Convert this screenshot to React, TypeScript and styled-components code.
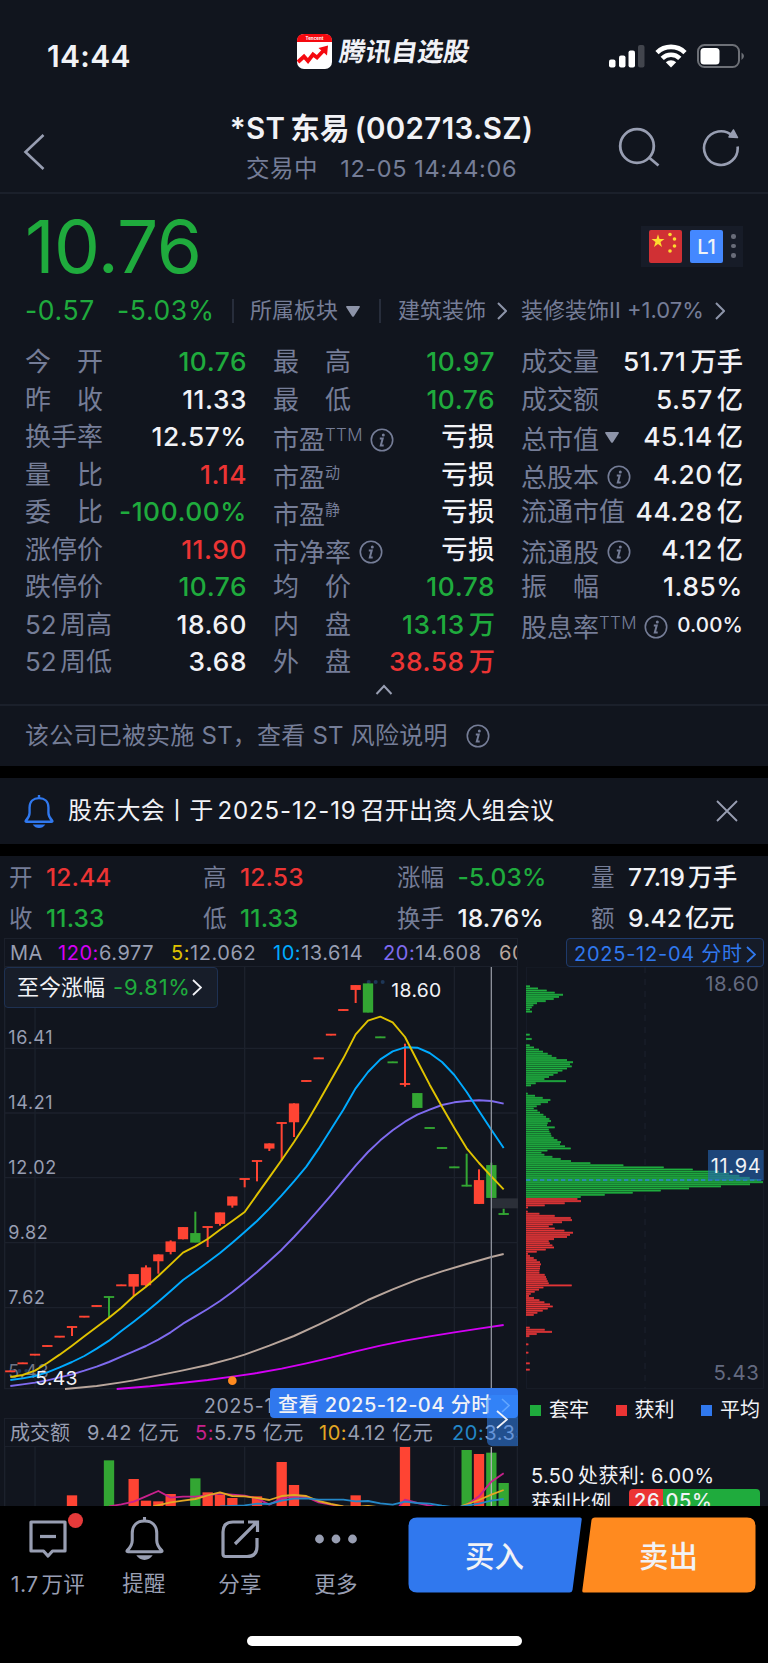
import React from "react";
import styled, { createGlobalStyle } from "styled-components";

const c = {
  bg: "#11151e",
  line: "#1b202b",
  label: "#757d97",
  text: "#f1f2f6",
  chart: "#989eb2",
  green: "#1fab3d",
  red: "#ec3434",
  blue: "#3078ee",
  orange: "#ff8a1f",
};

type Tone = "up" | "down" | "flat";
const tone = (t?: Tone) => (t === "up" ? c.red : t === "down" ? c.green : c.text);

const Global = createGlobalStyle`
  * { box-sizing: border-box; }
  body { margin: 0; background: #000; }
`;

const Page = styled.div`
  width: 768px;
  height: 1663px;
  overflow: hidden;
  display: flex;
  flex-direction: column;
  background: #000;
  color: ${c.text};
  font-family: Inter, "Noto Sans CJK SC", sans-serif;
  line-height: 1.25;
  white-space: nowrap;
`;

/* ---------- status bar ---------- */
const StatusBar = styled.div`
  display: grid;
  grid-template-columns: 250px 1fr 171px;
  height: 104px;
  padding-left: 47px;
  background: ${c.bg};
`;
const Clock = styled.div`
  padding-top: 38px;
  font-size: 30px;
  line-height: 36px;
  font-weight: 600;
  letter-spacing: 0.35px;
`;
const Brand = styled.div`
  display: flex;
  gap: 5px;
  padding-top: 34px;
`;
const BrandName = styled.div`
  font-size: 26px;
  line-height: 35px;
  font-weight: 700;
  transform: skewX(-9deg);
`;
const StatusIcons = styled.div`
  display: flex;
  gap: 10px;
  padding: 44px 0 0 12px;
`;

/* ---------- title bar ---------- */
const TitleBar = styled.div`
  display: grid;
  grid-template-columns: 180px 1fr 180px;
  height: 90px;
  background: ${c.bg};
  border-bottom: 2px solid ${c.line};
`;
const BackButton = styled.div`
  padding: 29px 0 0 22px;
`;
const TitleBlock = styled.div`
  display: flex;
  flex-direction: column;
  align-items: center;
  padding-right: 5px;
`;
const Title = styled.div`
  margin-top: 4px;
  font-size: 29.5px;
  line-height: 40px;
  font-weight: 600;
  letter-spacing: 0.35px;
  word-spacing: -3px;
`;
const SubTitle = styled.div`
  display: flex;
  gap: 22px;
  margin-top: 3px;
  font-size: 23.5px;
  line-height: 36px;
  letter-spacing: 0.6px;
  color: ${c.label};
`;
const TitleActions = styled.div`
  display: flex;
  gap: 40px;
  padding: 22px 0 0 29px;
`;

/* ---------- quote ---------- */
const Quote = styled.section`
  height: 512px;
  padding: 0 25px;
  background: ${c.bg};
  border-bottom: 2px solid ${c.line};
`;
const PriceRow = styled.div`
  display: flex;
  justify-content: space-between;
  height: 95px;
`;
const Price = styled.div`
  padding-top: 7px;
  font-size: 73px;
  line-height: 92px;
  letter-spacing: -0.6px;
  color: ${c.green};
`;
const Badges = styled.div`
  display: flex;
  gap: 8px;
  width: 102px;
  height: 41px;
  margin-top: 32px;
  padding: 4px 0 0 8px;
  background: #171c28;
`;
const LevelBadge = styled.div`
  width: 33px;
  height: 33px;
  border-radius: 2px;
  background: #4488ff;
  font-size: 20px;
  line-height: 35px;
  font-weight: 500;
  text-align: center;
`;
const BadgeDots = styled.div`
  display: flex;
  flex-direction: column;
  gap: 5px;
  padding: 4px 0 0;
  i {
    width: 4.5px;
    height: 4.5px;
    border-radius: 50%;
    background: #686c79;
  }
`;
const ChangeRow = styled.div`
  display: flex;
  align-items: center;
  height: 44px;
  font-size: 22px;
  color: ${c.label};
`;
const Change = styled.span<{ $w: number }>`
  width: ${(p) => p.$w}px;
  font-size: 26.5px;
  letter-spacing: 0.65px;
  color: ${c.green};
`;
const Divider = styled.span`
  width: 2px;
  height: 24px;
  background: #272d3b;
`;
const Sector = styled.span<{ $w: number; $left: number }>`
  display: flex;
  align-items: center;
  justify-content: space-between;
  width: ${(p) => p.$w}px;
  margin-left: ${(p) => p.$left}px;
`;
const SectorMove = styled.span`
  margin-right: 3px;
  margin-left: -2px;
`;
const Stats = styled.div`
  display: grid;
  grid-template-columns: repeat(3, 222px);
  column-gap: 26px;
  padding-top: 10px;
`;
const StatColumn = styled.div`
  display: flex;
  flex-direction: column;
`;
const Stat = styled.div`
  display: flex;
  justify-content: space-between;
  height: 37.5px;
  font-size: 26px;
  line-height: 37.5px;
`;
const StatLabel = styled.div<{ $drop?: boolean }>`
  display: flex;
  color: ${c.label};
  word-spacing: -4px;
  padding-top: ${(p) => (p.$drop ? 3 : 0)}px;
`;
const Spread = styled.span`
  display: flex;
  justify-content: space-between;
  width: 78px;
`;
const Sup = styled.span<{ $latin?: boolean }>`
  font-size: ${(p) => (p.$latin ? 17 : 15)}px;
  font-weight: ${(p) => (p.$latin ? 300 : 400)};
  line-height: ${(p) => (p.$latin ? 28 : 28)}px;
  letter-spacing: ${(p) => (p.$latin ? 0.3 : 0)}px;
`;
const IconSlot = styled.span<{ $left: number; $top?: number }>`
  display: flex;
  margin-left: ${(p) => p.$left}px;
  padding-top: ${(p) => p.$top ?? 6.5}px;
`;
const StatValue = styled.div<{ $tone?: Tone; $small?: boolean }>`
  display: flex;
  gap: 4px;
  font-weight: 500;
  font-size: ${(p) => (p.$small ? 20.5 : 26.3)}px;
  color: ${(p) => tone(p.$tone)};
`;
const Figure = styled.span<{ $small?: boolean }>`
  letter-spacing: ${(p) => (p.$small ? 0.1 : 0.55)}px;
`;
const Collapse = styled.div`
  display: flex;
  justify-content: center;
  padding-top: 3px;
`;

/* ---------- notices ---------- */
const RiskNotice = styled.div`
  display: flex;
  align-items: center;
  gap: 18px;
  height: 60px;
  padding-left: 25px;
  background: ${c.bg};
  color: ${c.label};
  font-size: 24px;
  letter-spacing: 0.22px;
`;
const Event = styled.div`
  display: flex;
  align-items: center;
  height: 66px;
  margin: 12px 0;
  padding: 0 30px 0 24px;
  background: ${c.bg};
  font-size: 24px;
`;
const EventText = styled.div`
  display: flex;
  flex: 1;
  gap: 4px;
  margin-left: 14px;
  line-height: 36px;
  letter-spacing: 0.25px;
`;
const EventDate = styled.span`
  letter-spacing: 0.9px;
`;

/* ---------- day summary ---------- */
const Summary = styled.div`
  display: grid;
  grid-template-columns: 194px 194px 194px 1fr;
  grid-auto-rows: 41px;
  height: 82px;
  padding: 0.5px 0 0 9px;
  background: ${c.bg};
  font-size: 23.5px;
  line-height: 41px;
`;
const SummaryItem = styled.div`
  display: flex;
  gap: 13.5px;
  color: ${c.label};
`;
const SummaryValue = styled.span<{ $tone?: Tone }>`
  display: flex;
  gap: 3px;
  font-size: 24.5px;
  font-weight: 500;
  letter-spacing: 0.15px;
  color: ${(p) => tone(p.$tone)};
`;

/* ---------- charts ---------- */
const Charts = styled.div`
  display: grid;
  grid-template-columns: 514px 238px;
  column-gap: 8px;
  height: 568px;
  padding-left: 4px;
  background: ${c.bg};
  overflow: hidden;
`;
const Pane = styled.div`
  position: relative;
  display: flex;
  flex-direction: column;
  width: 514px;
`;
const Legend = styled.div`
  display: flex;
  align-items: center;
  flex: none;
  height: 29px;
  border: 1px solid ${c.line};
  padding: 2px 0 0 5px;
  overflow: hidden;
  font-size: 20px;
  color: ${c.chart};
`;
const LegendItem = styled.span<{ $w: number; $ls?: number }>`
  flex: none;
  width: ${(p) => p.$w}px;
  letter-spacing: ${(p) => p.$ls ?? 0.55}px;
`;
const Key = styled.span<{ $c: string }>`
  color: ${(p) => p.$c};
`;
const ChartSvg = styled.svg`
  display: block;
  flex: none;
  font-family: Inter, "Noto Sans CJK SC", sans-serif;
`;
const SinceBadge = styled.div`
  position: absolute;
  left: 0;
  top: 29px;
  display: flex;
  align-items: center;
  width: 214px;
  height: 41px;
  padding-left: 12px;
  border: 1px solid #1e3152;
  border-radius: 4px;
  background: #171d29;
  font-size: 22px;
`;
const SinceValue = styled.span`
  width: 79px;
  margin-left: 8px;
  color: ${c.green};
  letter-spacing: 0.75px;
`;
const DateRow = styled.div`
  height: 28px;
  padding: 2px 0 0 200px;
  font-size: 19.5px;
  line-height: 28px;
  letter-spacing: 0.7px;
  color: ${c.chart};
`;
const DayButton = styled.div`
  position: absolute;
  left: 266px;
  top: 450px;
  display: flex;
  align-items: center;
  justify-content: space-between;
  width: 248px;
  height: 30px;
  padding: 4px 8px 0 8px;
  border-radius: 4px;
  background: ${c.blue};
  font-size: 20px;
  font-weight: 500;
  letter-spacing: 0.5px;
`;
const NextTile = styled.div`
  position: absolute;
  left: 483px;
  top: 457px;
  display: flex;
  justify-content: center;
  width: 31px;
  height: 51px;
  padding: 15px 2px 0 0;
  border-radius: 5px 0 0 5px;
  background: rgba(52, 140, 255, 0.5);
`;
const SidePane = styled.div`
  display: flex;
  flex-direction: column;
  width: 242px;
`;
const MinuteButton = styled.div`
  display: flex;
  align-items: center;
  justify-content: space-between;
  align-self: flex-end;
  flex: none;
  width: 198px;
  height: 29px;
  margin-right: 4px;
  padding: 3px 7px 0 7px;
  border: 1px solid #1e3a6b;
  border-radius: 4px;
  background: #151b28;
  color: ${c.blue};
  font-size: 20px;
  letter-spacing: 0.75px;
`;
const ChipLegend = styled.div`
  display: flex;
  gap: 26px;
  height: 65px;
  padding: 5px 0 0 4px;
  font-size: 20px;
  line-height: 30px;
`;
const ChipKey = styled.span<{ $c: string }>`
  display: flex;
  align-items: center;
  gap: 8px;
  height: 30px;
  width: 59.5px;
  &::before {
    content: "";
    flex: none;
    width: 11px;
    height: 11px;
    background: ${(p) => p.$c};
  }
`;
const ChipText = styled.div`
  display: flex;
  gap: 4px;
  flex: none;
  height: 34px;
  padding: 6px 0 0 5px;
  font-size: 20px;
  line-height: 30px;
  letter-spacing: 0.3px;
`;
const ChipRatio = styled.div`
  display: flex;
  justify-content: space-between;
  flex: none;
  height: 28px;
  padding: 0 8px 0 5px;
  font-size: 20px;
  line-height: 28px;
`;
const RatioBar = styled.div`
  width: 131px;
  height: 24px;
  padding-left: 5px;
  border-radius: 4px;
  background: linear-gradient(90deg, ${c.red} 26.05%, ${c.green} 26.05%);
  font-weight: 500;
  line-height: 25px;
  letter-spacing: 0.6px;
`;

/* ---------- bottom ---------- */
const BottomBar = styled.div`
  position: relative;
  display: flex;
  height: 130px;
  background: #000;
`;
const Tab = styled.div`
  position: relative;
  display: flex;
  flex-direction: column;
  align-items: center;
  width: 96px;
  padding-top: 11px;
`;
const TabLabel = styled.span`
  display: flex;
  gap: 3px;
  margin-top: 7.5px;
  font-size: 21.5px;
  line-height: 32px;
  letter-spacing: 0.3px;
  color: ${c.chart};
`;
const RedDot = styled.span`
  position: absolute;
  left: 68px;
  top: 7px;
  width: 15px;
  height: 15px;
  border-radius: 50%;
  background: #e53a3a;
`;
const Trade = styled.div`
  position: relative;
  display: grid;
  grid-template-columns: 174px 174px;
  height: 76px;
  margin: 11px 0 0 24px;
`;
const TradeShape = styled.svg`
  position: absolute;
  left: 0;
  top: 0;
`;
const TradeLabel = styled.span<{ $shift: number }>`
  position: relative;
  padding-left: ${(p) => p.$shift}px;
  font-size: 29.5px;
  line-height: 79px;
  font-weight: 500;
`;
const HomeIndicator = styled.div`
  width: 275px;
  height: 10px;
  margin: 0 auto;
  border-radius: 5px;
  background: #fff;
`;

/* ---------- icons ---------- */
const Chevron = ({ w = 9, h = 16, s = 2, color = "#8d94a9" }) => (
  <svg width={w} height={h} viewBox={`0 0 ${w} ${h}`} fill="none" stroke={color} strokeWidth={s}>
    <path d={`M1 1L${w - 1} ${h / 2}L1 ${h - 1}`} />
  </svg>
);
const Caret = () => (
  <svg width="14" height="11" viewBox="0 0 14 11" fill="#8d94a9">
    <path d="M1 0H13Q14.500 0 13.600 1.400L8 10.200Q7 11.400 6 10.200L.4 1.400Q-.5 0 1 0Z" />
  </svg>
);
const Info = () => (
  <svg width="24" height="24" viewBox="0 0 24 24" fill="none" stroke="#757d97">
    <circle cx="12" cy="12" r="10.700" strokeWidth="1.600" />
    <circle cx="13.300" cy="6.900" r="1.500" fill="#757d97" stroke="none" />
    <path d="M9.800 10.500H12.700L10.800 17.500H13.700" strokeWidth="2" />
  </svg>
);
const Bell = ({ size = 38, color = c.chart, s = 3 }) => (
  <svg width={size} height={size * 1.1} viewBox="0 0 38 42" fill="none" stroke={color} strokeWidth={s}>
    <path d="M19 0V4" />
    <path d="M7 16C7 8 12 4 19 4S31 8 31 16V23C31 27 33 30 36 33Q36.500 34 35 34H3Q1.500 34 2 33C5 30 7 27 7 23Z" strokeLinejoin="round" />
    <path d="M11 37.500H27Q24 42 19 42T11 37.500Z" fill={color} stroke="none" />
  </svg>
);

/* ---------- chart data (thirds of a pixel) ---------- */
const X0 = 31;
const STEP = 37;
// [body top, body bottom, wick top, wick bottom, falling]
const candles: [number, number, number, number, number?][] = [
  [1321, 1325, 1321, 1325], [1297, 1301, 1297, 1301], [1271, 1275, 1271, 1275], [1245, 1249, 1245, 1249],
  [1217, 1221, 1217, 1221], [1188, 1192, 1188, 1217], [1157, 1161, 1157, 1161], [1125, 1129, 1125, 1129],
  [1098, 1102, 1098, 1162, 1], [1063, 1067, 1063, 1067], [1032, 1068, 1032, 1097], [1012, 1064, 1005, 1068],
  [973, 992, 972, 1030], [934, 964, 930, 972], [891, 926, 891, 927], [909, 936, 844, 936, 1],
  [888, 892, 888, 950], [847, 880, 847, 886], [799, 825, 799, 832], [744, 748, 744, 771],
  [690, 694, 690, 753], [640, 654, 639, 662], [576, 580, 576, 690], [520, 575, 519, 620],
  [450, 454, 450, 454], [382, 386, 382, 386], [311, 315, 311, 315], [237, 241, 237, 241],
  [165, 178, 165, 218], [160, 246, 160, 246, 1], [319, 323, 319, 323, 1], [394, 398, 394, 398, 1],
  [459, 463, 340, 469], [489, 532, 489, 532, 1], [591, 595, 591, 595, 1], [651, 655, 651, 655, 1],
  [709, 713, 709, 713, 1], [764, 768, 670, 768, 1], [750, 820, 717, 821], [705, 802, 697, 802, 1],
  [849, 853, 835, 854, 1],
];
const ma5 = [1340, 1334, 1321, 1298, 1273, 1246, 1218, 1190, 1162, 1132, 1098, 1069, 1037, 1002, 967, 948, 926, 898, 872, 845, 793, 741, 689, 635, 578, 514, 449, 384, 312, 271, 259, 276, 320, 392, 463, 529, 593, 654, 698, 738, 777];
const ma10 = [1349, 1344, 1337, 1326, 1311, 1295, 1277, 1255, 1231, 1202, 1174, 1145, 1114, 1082, 1049, 1023, 996, 968, 937, 905, 872, 835, 795, 753, 709, 655, 597, 538, 474, 425, 387, 363, 351, 352, 368, 395, 434, 485, 542, 598, 653];
const ma20 = [1367, 1362, 1357, 1350, 1341, 1332, 1321, 1309, 1295, 1279, 1263, 1247, 1228, 1206, 1180, 1158, 1136, 1112, 1085, 1056, 1025, 992, 958, 920, 880, 838, 795, 750, 706, 665, 630, 600, 574, 553, 538, 524, 516, 512, 510, 512, 520];
const toPoints = (ys: number[]) => ys.map((y, i) => `${X0 + i * STEP},${y}`).join(" ");
const ma60 = "195,1376 290,1367 364,1356 401,1350 475,1335 549,1320 623,1304 697,1284 734,1273 808,1246 882,1217 956,1183 1030,1147 1067,1128 1104,1109 1178,1077 1252,1048 1326,1023 1400,1001 1474,980 1511,971";
const ma120 = "350,1376 450,1368 549,1357 623,1349 697,1339 771,1328 845,1315 919,1299 993,1282 1067,1263 1141,1246 1215,1231 1289,1218 1363,1206 1437,1195 1511,1184";

const volumes: [number, number, number?][] = [
  [5, 343], [8, 238, 1], [10, 294], [11, 359], [12, 361], [13, 339], [15, 292, 1], [16, 334], [17, 342], [18, 351],
  [20, 346], [22, 243], [23, 312], [28, 343], [32, 198], [37, 207, 1], [38, 219], [39, 215, 1], [40, 306, 1],
];

const HIST_STEP = 6.32;
// [first row offset, bar ends…]
const trapped: number[][] = [
  [168, 60, 84, 110, 134, 159, 147, 131, 107, 81, 70, 65, 60, 66],
  [313, 59], [326, 65],
  [345, 59, 72, 87, 99, 113, 125, 139, 171, 189, 180, 185, 171, 157, 143, 130, 117, 103, 168, 77, 63],
  [490, 53, 75, 98, 121, 114, 92, 80, 71, 82, 90, 100, 108, 118, 123, 113, 111, 134, 116, 118, 122, 124, 131, 142, 153, 150, 165, 182, 112, 94, 103, 127, 152, 183, 241, 340, 461, 548, 627, 657, 688, 719, 742, 759, 720, 633, 537, 452, 368, 284, 212],
];
const profit: number[][] = [
  [806, 202, 213, 164, 104, 54],
  [844, 53, 88, 134, 182, 186, 156, 128, 116, 134, 163, 189, 180, 171, 132, 116, 119, 127, 132, 107, 80, 54, 60, 71, 80, 90, 93, 90, 90, 88, 88, 104, 108, 110, 113, 116, 185, 100, 87, 74, 62, 57, 72, 88, 103, 120, 128, 113, 98, 82, 71],
  [1192, 59, 104, 126, 80, 58],
  [1242, 55], [1267, 55], [1299, 59], [1318, 59],
];

const Histogram = ({ groups, dim, bright }: { groups: number[][]; dim: string; bright: string }) => (
  <>
    {groups.flatMap((g) =>
      g.slice(1).map((x, i) => {
        const y = g[0] + i * HIST_STEP;
        return (
          <g key={`${g[0]}-${i}`}>
            <rect x={48} y={y - 3.2} width={x - 48} height={6.4} fill={dim} />
            <rect x={48} y={y - 1.5} width={x - 48} height={3} fill={bright} />
          </g>
        );
      })
    )}
  </>
);

const PriceChart = () => (
  <ChartSvg width="514" height="423" viewBox="12 110 1542 1269">
    <g stroke="#1c212c" strokeWidth="4" fill="none">
      <path d="M14 110V1375H1552V110" />
      <path d="M14 354H1552M14 548H1552M14 742H1552M14 937H1552M14 1132H1552M105 110V1375M734 110V1375M1363 110V1375" />
    </g>
    <g fill="#989eb2" fontSize="54" letterSpacing="1.900">
      <text x="25" y="342">16.41</text>
      <text x="25" y="536">14.21</text>
      <text x="25" y="731">12.02</text>
      <text x="25" y="925">9.82</text>
      <text x="25" y="1120">7.62</text>
      <text x="25" y="1344" opacity=".7">5.43</text>
    </g>
    <g fill="#1d3656">
      {[1106, 1127, 1148].map((x) => <circle key={x} cx={x} cy={155} r={6} />)}
      {[37, 58, 79].map((x) => <circle key={x} cx={x} cy={1322} r={6} />)}
    </g>
    {candles.map(([a, b, w1, w2, down], i) => {
      const x = X0 + i * STEP;
      return (
        <g key={i} fill={down ? "#33a633" : "#ff4433"}>
          <rect x={x - 15.5} y={a - 0.8} width={31} height={b - a + 1.6} />
          <rect x={x - 3} y={w1} width={6} height={w2 - w1} />
        </g>
      );
    })}
    <g fill="none" strokeWidth="5.800" strokeLinejoin="round">
      <polyline points={ma60} stroke="#b9a69c" />
      <polyline points={ma120} stroke="#d400f5" />
      <polyline points={toPoints(ma20)} stroke="#7f6bf0" />
      <polyline points={toPoints(ma10)} stroke="#00aaff" />
      <polyline points={toPoints(ma5)} stroke="#e0c300" />
    </g>
    <rect x="1476" y="804" width="78" height="30" fill="#2b2f38" />
    <path d="M1474 110V1379" stroke="#8c909a" strokeWidth="4" />
    <circle cx="697" cy="1351" r="13" fill={c.orange} />
    <g fill="#f1f2f6" fontSize="58" letterSpacing="1">
      <text x="1174" y="200">18.60</text>
      <text x="106" y="1364">5.43</text>
    </g>
  </ChartSvg>
);

const VolumeChart = () => (
  <ChartSvg width="514" height="60" viewBox="12 198 1542 180">
    <path d="M14 196V378M1552 196V378M105 196V378M734 196V378M1363 196V378" stroke="#1c212c" strokeWidth="4" />
    {volumes.map(([i, y, down]) => (
      <rect key={i} x={X0 + i * STEP - 15.5} y={y} width={31} height={380 - y} fill={down ? "#33a633" : "#ff4433"} />
    ))}
    <path d="M1474 196V378" stroke="#aab0b0" strokeWidth="4" />
    <g fill="none" strokeWidth="5.500" strokeLinejoin="round">
      <g stroke="#c8218c">
        <polyline points="327,376 364,370 401,362 438,346 475,330 512,350 549,347 586,347 623,343 660,338 697,341 734,344 771,352 808,371 845,352 882,347 919,348 956,364 993,371 1030,377" />
        <polyline points="1197,377 1215,356 1252,366 1289,374 1310,378" />
        <polyline points="1385,377 1400,371 1437,346 1474,302 1511,277" />
      </g>
      <g stroke="#e3a723">
        <polyline points="460,376 512,364 549,359 586,354 623,343 660,334 697,345 734,346 771,351 808,357 845,345 882,342 919,345 956,360 993,369 1030,376 1065,378 1104,375 1140,379" />
        <polyline points="1385,375 1437,357 1474,341 1511,327" />
      </g>
      <g stroke="#2487c7">
        <polyline points="660,376 734,373 771,368 808,369 845,359 882,353 919,352 956,356 1030,356 1067,361 1104,360 1141,367 1178,371 1215,362 1252,366 1289,368 1326,374 1355,378" />
        <polyline points="1380,377 1437,368 1474,359 1511,354" />
      </g>
    </g>
  </ChartSvg>
);

const ChipChart = () => (
  <ChartSvg width="242" height="423" viewBox="48 110 726 1269">
    <path d="M49 110V1375H761V110Z" stroke="#191e29" strokeWidth="3" fill="none" />
    <path d="M405 110V1375" stroke="#1a1f2a" strokeWidth="4" strokeDasharray="18 18" />
    <Histogram groups={trapped} dim="#1a8534" bright="#20b041" />
    <Histogram groups={profit} dim="#a92c32" bright="#e83737" />
    <path d="M48 749H761" stroke="#2d86d2" strokeWidth="4" strokeDasharray="13 8" />
    <rect x="594" y="659" width="167" height="91" fill="#2668b8" opacity=".6" />
    <text x="602" y="729" fontSize="60" fill="#f1f2f6" textLength="150">11.94</text>
    <g fill="#646a80" fontSize="61" letterSpacing="1.800" textAnchor="end">
      <text x="748" y="182">18.60</text>
      <text x="748" y="1348">5.43</text>
    </g>
  </ChartSvg>
);

/* ---------- stat table ---------- */
type StatDef = { l: string; v: string; u?: string; t?: Tone; sup?: string; info?: number; caret?: boolean; drop?: boolean; small?: boolean };
const stats: StatDef[][] = [
  [
    { l: "今开", v: "10.76", t: "down" }, { l: "昨收", v: "11.33" }, { l: "换手率", v: "12.57%" },
    { l: "量比", v: "1.14", t: "up" }, { l: "委比", v: "-100.00%", t: "down" }, { l: "涨停价", v: "11.90", t: "up" },
    { l: "跌停价", v: "10.76", t: "down" }, { l: "52 周高", v: "18.60" }, { l: "52 周低", v: "3.68" },
  ],
  [
    { l: "最高", v: "10.97", t: "down" }, { l: "最低", v: "10.76", t: "down" },
    { l: "市盈", v: "亏损", sup: "TTM", info: 7, drop: true }, { l: "市盈", v: "亏损", sup: "动", drop: true },
    { l: "市盈", v: "亏损", sup: "静", drop: true }, { l: "市净率", v: "亏损", info: 8, drop: true },
    { l: "均价", v: "10.78", t: "down" }, { l: "内盘", v: "13.13", u: "万", t: "down" }, { l: "外盘", v: "38.58", u: "万", t: "up" },
  ],
  [
    { l: "成交量", v: "51.71", u: "万手" }, { l: "成交额", v: "5.57", u: "亿" }, { l: "总市值", v: "45.14", u: "亿", caret: true, drop: true },
    { l: "总股本", v: "4.20", u: "亿", info: 8, drop: true }, { l: "流通市值", v: "44.28", u: "亿" },
    { l: "流通股", v: "4.12", u: "亿", info: 8, drop: true }, { l: "振幅", v: "1.85%" },
    { l: "股息率", v: "0.00%", sup: "TTM", info: 7, drop: true, small: true },
  ],
];

const StatCell = ({ d }: { d: StatDef }) => (
  <Stat>
    <StatLabel $drop={d.drop}>
      {d.l.length === 2 && !d.sup ? (
        <Spread><span>{d.l[0]}</span><span>{d.l[1]}</span></Spread>
      ) : (
        <span>{d.l}</span>
      )}
      {d.sup && <Sup $latin={d.sup === "TTM"}>{d.sup}</Sup>}
      {d.caret && <IconSlot $left={6} $top={10.5}><Caret /></IconSlot>}
      {d.info && <IconSlot $left={d.info}><Info /></IconSlot>}
    </StatLabel>
    <StatValue $tone={d.t} $small={d.small}>
      <Figure $small={d.small}>{d.v}</Figure>
      {d.u && <span>{d.u}</span>}
    </StatValue>
  </Stat>
);

const summary: { l: string; v: string; u?: string; t?: Tone }[] = [
  { l: "开", v: "12.44", t: "up" }, { l: "高", v: "12.53", t: "up" }, { l: "涨幅", v: "-5.03%", t: "down" }, { l: "量", v: "77.19", u: "万手" },
  { l: "收", v: "11.33", t: "down" }, { l: "低", v: "11.33", t: "down" }, { l: "换手", v: "18.76%" }, { l: "额", v: "9.42", u: "亿元" },
];

export default function App() {
  return (
    <Page>
      <Global />
      <StatusBar>
        <Clock>14:44</Clock>
        <Brand>
          <svg width="35" height="35" viewBox="0 0 35 35">
            <rect width="35" height="35" rx="7" fill="#fff" />
            <path d="M0 8V7Q0 0 7 0H28Q35 0 35 7V8Z" fill="#f5090f" />
            <text x="17.500" y="6" fontSize="4.500" fontWeight="700" fill="#fff" textAnchor="middle" fontFamily="Inter">Tencent</text>
            <path d="M1 28L7 22.500L11 27L16 20.500L20 23.500L28 15" fill="none" stroke="#f5090f" strokeWidth="3.800" />
            <path d="M21.500 14L31 11.500L30 21.500Z" fill="#f5090f" />
          </svg>
          <BrandName>腾讯自选股</BrandName>
        </Brand>
        <StatusIcons>
          <svg width="36" height="24" viewBox="0 0 36 24" fill="#fff">
            <rect x="0" y="15.500" width="6.500" height="8" rx="2" />
            <rect x="10" y="11.500" width="6.500" height="12" rx="2" />
            <rect x="19.500" y="6.500" width="6.500" height="17" rx="2" />
            <rect x="29" y="1" width="6.500" height="22.500" rx="2" fill="#42454d" />
          </svg>
          <svg width="32" height="24" viewBox="0 0 32 24" fill="none" stroke="#fff" strokeWidth="4.600">
            <path d="M2 8.600A20 20 0 0 1 30 8.600" />
            <path d="M7.200 14.400A12.500 12.500 0 0 1 24.800 14.400" />
            <path d="M16 23.500L10.800 18.300A7.500 7.500 0 0 1 21.200 18.300Z" fill="#fff" stroke="none" />
          </svg>
          <svg width="48" height="24" viewBox="0 0 48 24">
            <rect x="1" y="1" width="41" height="22" rx="6.500" fill="none" stroke="#6d7077" strokeWidth="2" />
            <rect x="3.500" y="4" width="19" height="16.500" rx="3.500" fill="#fff" />
            <path d="M44.500 8.500Q47 10 47 12T44.500 16Z" fill="#6d7077" />
          </svg>
        </StatusIcons>
      </StatusBar>

      <TitleBar>
        <BackButton>
          <svg width="24" height="38" viewBox="0 0 24 38" fill="none" stroke={c.chart} strokeWidth="2.600">
            <path d="M21.500 2L3.500 19L21.500 36" />
          </svg>
        </BackButton>
        <TitleBlock>
          <Title>*ST 东易 (002713.SZ)</Title>
          <SubTitle><span>交易中</span><span>12-05 14:44:06</span></SubTitle>
        </TitleBlock>
        <TitleActions>
          <svg width="44" height="44" viewBox="0 0 44 44" fill="none" stroke={c.chart} strokeWidth="2.800">
            <circle cx="20" cy="20" r="16.800" />
            <path d="M32 31.500L41.500 39.500" />
          </svg>
          <svg width="40" height="44" viewBox="0 0 40 44" fill="none" stroke={c.chart} strokeWidth="2.600">
            <path d="M31.500 10A16.800 16.800 0 1 0 36.600 20.500" />
            <path d="M32.500 4L36.500 11.500L28 11Z" fill={c.chart} strokeWidth="1.500" strokeLinejoin="round" />
          </svg>
        </TitleActions>
      </TitleBar>

      <Quote>
        <PriceRow>
          <Price>10.76</Price>
          <Badges>
            <svg width="33" height="33" viewBox="0 0 33 33">
              <rect width="33" height="33" rx="2" fill="#d03034" />
              <path d="M9 4.200L10.500 9H15.500L11.500 12L13 17L9 14L5 17L6.500 12L2.500 9H7.500Z" fill="#fddc2f" />
              <g fill="#fddc2f">
                <circle cx="21" cy="4.500" r="1.800" /><circle cx="25.500" cy="9" r="1.800" />
                <circle cx="25.500" cy="16" r="1.800" /><circle cx="21" cy="21" r="1.800" />
              </g>
            </svg>
            <LevelBadge>L1</LevelBadge>
            <BadgeDots><i /><i /><i /></BadgeDots>
          </Badges>
        </PriceRow>
        <ChangeRow>
          <Change $w={92}>-0.57</Change>
          <Change $w={115}>-5.03%</Change>
          <Divider />
          <Sector $w={110} $left={16}><span>所属板块</span><Caret /></Sector>
          <Sector $w={2} $left={19}><Divider /></Sector>
          <Sector $w={109} $left={17}><span>建筑装饰</span><Chevron w={10} h={18} /></Sector>
          <Sector $w={204} $left={14}><span>装修装饰Ⅱ</span><SectorMove>+1.07%</SectorMove><Chevron w={10} h={18} /></Sector>
        </ChangeRow>
        <Stats>
          {stats.map((col, i) => (
            <StatColumn key={i}>{col.map((d, j) => <StatCell key={j} d={d} />)}</StatColumn>
          ))}
        </Stats>
        <Collapse>
          <svg width="18" height="12" viewBox="0 0 18 12" fill="none" stroke={c.chart} strokeWidth="2">
            <path d="M1.500 10L9 2L16.500 10" />
          </svg>
        </Collapse>
      </Quote>

      <RiskNotice><span>该公司已被实施 ST，查看 ST 风险说明</span><Info /></RiskNotice>

      <Event>
        <Bell size={30} color={c.blue} s={3} />
        <EventText><span>股东大会丨于</span><EventDate>2025-12-19</EventDate><span>召开出资人组会议</span></EventText>
        <svg width="22" height="22" viewBox="0 0 22 22" fill="none" stroke={c.chart} strokeWidth="1.800">
          <path d="M1 1L21 21M21 1L1 21" />
        </svg>
      </Event>

      <Summary>
        {summary.map((d) => (
          <SummaryItem key={d.l}>
            <span>{d.l}</span>
            <SummaryValue $tone={d.t}><span>{d.v}</span>{d.u && <span>{d.u}</span>}</SummaryValue>
          </SummaryItem>
        ))}
      </Summary>

      <Charts>
        <Pane>
          <Legend>
            <LegendItem $w={48}>MA</LegendItem>
            <LegendItem $w={113}><Key $c="#d400f5">120:</Key>6.977</LegendItem>
            <LegendItem $w={102}><Key $c="#e0c300">5:</Key>12.062</LegendItem>
            <LegendItem $w={110}><Key $c="#00aaff">10:</Key>13.614</LegendItem>
            <LegendItem $w={116}><Key $c="#7f6bf0">20:</Key>14.608</LegendItem>
            <LegendItem $w={40}><Key $c="#b9a69c">60:</Key></LegendItem>
          </Legend>
          <PriceChart />
          <DateRow>2025-12</DateRow>
          <Legend>
            <LegendItem $w={77} $ls={0}>成交额</LegendItem>
            <LegendItem $w={108}>9.42 亿元</LegendItem>
            <LegendItem $w={124}>
              <Key $c="#c8218c">5:</Key>5.75 亿元
            </LegendItem>
            <LegendItem $w={133}>
              <Key $c="#e3a723">10:</Key>4.12 亿元
            </LegendItem>
            <LegendItem $w={100}><Key $c="#2487c7">20:</Key>3.35</LegendItem>
          </Legend>
          <VolumeChart />
          <SinceBadge>
            <span>至今涨幅</span><SinceValue>-9.81%</SinceValue><Chevron w={10} h={17} s={1.8} color="#f1f2f6" />
          </SinceBadge>
          <DayButton><span>查看 2025-12-04 分时</span><Chevron w={9} h={15} s={1.6} color="#8fc0ff" /></DayButton>
          <NextTile><Chevron w={12} h={19} s={1.8} color="#f1f2f6" /></NextTile>
        </Pane>
        <SidePane>
          <MinuteButton><span>2025-12-04 分时</span><Chevron w={10} h={17} s={1.8} color={c.blue} /></MinuteButton>
          <ChipChart />
          <ChipLegend>
            <ChipKey $c={c.green}>套牢</ChipKey>
            <ChipKey $c={c.red}>获利</ChipKey>
            <ChipKey $c={c.blue}>平均</ChipKey>
          </ChipLegend>
          <ChipText><span>5.50</span><span>处获利: 6.00%</span></ChipText>
          <ChipRatio><span>获利比例</span><RatioBar>26.05%</RatioBar></ChipRatio>
        </SidePane>
      </Charts>

      <BottomBar>
        <Tab>
          <svg width="42" height="43" viewBox="0 0 42 43" fill="none" stroke={c.chart} strokeWidth="3.200" strokeLinejoin="round">
            <path d="M4 5H38V34H25.500L21 39L16.500 34H4Z" /><path d="M13 19.500H29" />
          </svg>
          <RedDot />
          <TabLabel><span>1.7</span><span>万评</span></TabLabel>
        </Tab>
        <Tab>
          <Bell size={39} />
          <TabLabel>提醒</TabLabel>
        </Tab>
        <Tab>
          <svg width="42" height="43" viewBox="0 0 42 43" fill="none" stroke={c.chart} strokeWidth="3.200">
            <path d="M25 5H14Q4 5 4 15V37Q4 39.500 6.500 39.500H28Q38 39.500 38 29.500V21" />
            <path d="M16 27L38 5M29 5H38.500V15" />
          </svg>
          <TabLabel>分享</TabLabel>
        </Tab>
        <Tab>
          <svg width="42" height="43" viewBox="0 0 42 43" fill={c.chart}>
            <circle cx="4.500" cy="22" r="4.400" /><circle cx="21" cy="22" r="4.400" /><circle cx="37.500" cy="22" r="4.400" />
          </svg>
          <TabLabel>更多</TabLabel>
        </Tab>
        <Trade>
          <TradeShape width="348" height="76" viewBox="0 0 348 76">
            <path d="M9 .5H172Q174 .5 173.700 2.500L164.500 73Q164 75.500 161.500 75.500H9Q.5 75.500 .5 67V9Q.5 .5 9 .5Z" fill={c.blue} />
            <path d="M187 .5H339Q347.500 .5 347.500 9V67Q347.500 75.500 339 75.500H176Q174 75.500 174.300 73.500L183.500 3Q184 .5 187 .5Z" fill={c.orange} />
          </TradeShape>
          <TradeLabel $shift={57}>买入</TradeLabel>
          <TradeLabel $shift={57}>卖出</TradeLabel>
        </Trade>
      </BottomBar>
      <HomeIndicator />
    </Page>
  );
}
